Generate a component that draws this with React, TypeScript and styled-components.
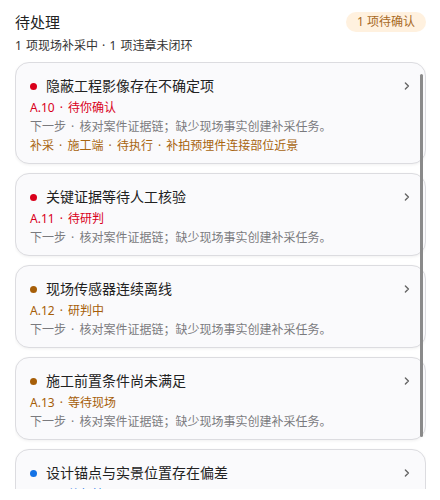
import React from 'react';
import styled, { createGlobalStyle } from 'styled-components';

type Tone = 'red' | 'amber' | 'blue';

interface Item {
  id: string;
  title: string;
  code: string;
  status: string;
  tone: Tone;
  next?: string;
  task?: string;
}

const toneColors: Record<Tone, string> = {
  red: '#d9001b',
  amber: '#a65e08',
  blue: '#1473e6',
};

const NEXT = '下一步 · 核对案件证据链；缺少现场事实创建补采任务。';

const items: Item[] = [
  {
    id: 'a10',
    title: '隐蔽工程影像存在不确定项',
    code: 'A.10',
    status: '待你确认',
    tone: 'red',
    next: NEXT,
    task: '补采 · 施工端 · 待执行 · 补拍预埋件连接部位近景',
  },
  { id: 'a11', title: '关键证据等待人工核验', code: 'A.11', status: '待研判', tone: 'red', next: NEXT },
  { id: 'a12', title: '现场传感器连续离线', code: 'A.12', status: '研判中', tone: 'amber', next: NEXT },
  { id: 'a13', title: '施工前置条件尚未满足', code: 'A.13', status: '等待现场', tone: 'amber', next: NEXT },
  { id: 'a14', title: '设计锚点与实景位置存在偏差', code: 'A.14', status: '待复核', tone: 'blue', next: NEXT },
];

export default function App() {
  return (
    <>
      <GlobalStyle />
      <Page>
        <Header>
          <Title>待处理</Title>
          <Badge>1 项待确认</Badge>
        </Header>
        <Summary>1 项现场补采中 · 1 项违章未闭环</Summary>
        <ListViewport>
          <List>
            {items.map((item) => (
              <Card key={item.id}>
                <CardBody>
                  <TitleRow>
                    <Dot $tone={item.tone} />
                    <CardTitle>{item.title}</CardTitle>
                  </TitleRow>
                  <Meta $tone={item.tone}>{`${item.code} · ${item.status}`}</Meta>
                  {!!item.next && <NextStep>{item.next}</NextStep>}
                  {!!item.task && <Task>{item.task}</Task>}
                </CardBody>
                <Chevron viewBox="0 0 8 10" aria-hidden>
                  <path d="M2.4 2 L5.4 5 L2.4 8" />
                </Chevron>
              </Card>
            ))}
          </List>
          <ScrollThumb />
        </ListViewport>
      </Page>
    </>
  );
}

const GlobalStyle = createGlobalStyle`
  html, body {
    margin: 0;
    padding: 0;
    background: #ffffff;
    overflow: hidden;
  }
  body {
    font-family: "Noto Sans", "Noto Sans CJK SC", sans-serif;
    color: #222;
  }
`;

const Page = styled.div`
  height: 500px;
  padding: 12px 14px 11px 15px;
  box-sizing: border-box;
  display: flex;
  flex-direction: column;
`;

const Header = styled.div`
  display: flex;
  align-items: center;
  justify-content: space-between;
  height: 20px;
`;

const Title = styled.div`
  font-size: 15px;
  line-height: 20px;
  color: #222;
`;

const Badge = styled.div`
  height: 20px;
  line-height: 20px;
  padding: 0 11px;
  border-radius: 10px;
  background: #fff1df;
  color: #a86a1f;
  font-size: 12px;
`;

const Summary = styled.div`
  margin-top: 5px;
  font-size: 12px;
  line-height: 18px;
  color: #333;
  word-spacing: 1px;
`;

const ListViewport = styled.div`
  position: relative;
  flex: 1;
  min-height: 0;
  margin-top: 7px;
  overflow: hidden;
`;

const List = styled.div`
  display: flex;
  flex-direction: column;
  gap: 9px;
`;

const Card = styled.div`
  display: flex;
  align-items: flex-start;
  padding: 12px 14px 8px 14px;
  border: 1px solid #dcdce0;
  border-radius: 14px;
  background: #fafafc;
  box-shadow: 0 1px 3px rgba(0, 0, 0, 0.06);
`;

const CardBody = styled.div`
  flex: 1;
  min-width: 0;
  display: flex;
  flex-direction: column;
  font-size: 12px;
  line-height: 19px;
  word-spacing: 2px;
`;

const TitleRow = styled.div`
  display: flex;
  align-items: center;
  gap: 9px;
  height: 22px;
`;

const Dot = styled.span<{ $tone: Tone }>`
  width: 7px;
  height: 7px;
  border-radius: 50%;
  flex-shrink: 0;
  background: ${({ $tone }) => toneColors[$tone]};
`;

const CardTitle = styled.div`
  font-size: 14px;
  line-height: 22px;
  color: #222;
`;

const Meta = styled.div<{ $tone: Tone }>`
  margin-top: 1px;
  color: ${({ $tone }) => toneColors[$tone]};
`;

const NextStep = styled.div`
  color: #7a7a7e;
`;

const Task = styled.div`
  color: #a8650f;
`;

const Chevron = styled.svg`
  width: 8px;
  height: 10px;
  margin-top: 6px;
  fill: none;
  stroke: #666;
  stroke-width: 1.4;
  stroke-linecap: round;
  stroke-linejoin: round;
`;

const ScrollThumb = styled.div`
  position: absolute;
  top: 12px;
  right: 3px;
  width: 3px;
  height: 363px;
  border-radius: 2px;
  background: #8a8a8a;
`;
